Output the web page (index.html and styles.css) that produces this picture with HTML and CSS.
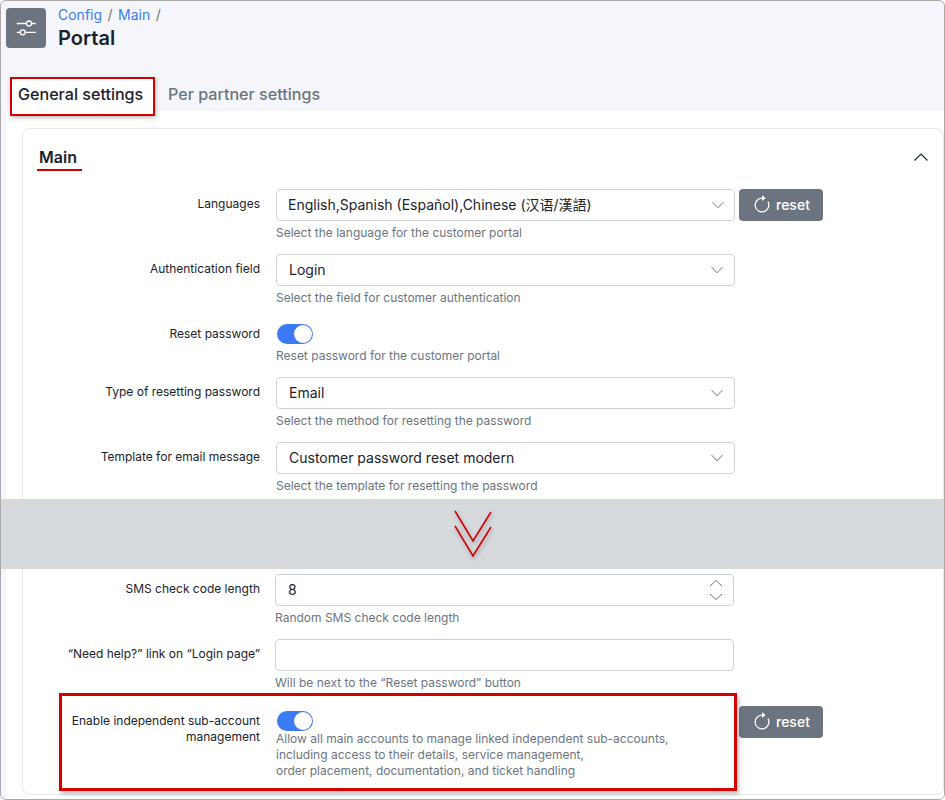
FILE: index.html
```html
<!DOCTYPE html>
<html lang="en">
<head>
    <meta charset="UTF-8">
    <meta name="viewport" content="width=device-width, initial-scale=1.0">
    <title>Portal</title>
    <link rel="stylesheet" href="styles.css">
</head>
<body>
    <div class="page">
        <header class="page-header">
            <div class="page-icon">
                <svg width="28" height="28" viewBox="0 0 28 28" fill="none" stroke="#fff" stroke-width="1.3">
                    <path d="M4.700 9.500H23.700M4.700 18.300H23.700"/>
                    <circle cx="17" cy="9.500" r="2.500" fill="#6c757f"/>
                    <circle cx="10.700" cy="18.300" r="2.500" fill="#6c757f"/>
                </svg>
            </div>
            <div>
                <div class="breadcrumb">
                    <a href="#">Config</a><span>/</span><a href="#">Main</a><span>/</span>
                </div>
                <h1>Portal</h1>
            </div>
        </header>

        <div class="tabs">
            <div class="tab active">General settings</div>
            <div class="tab">Per partner settings</div>
        </div>

        <div class="tab-content">
            <div class="card">
                <div class="card-head">
                    <h2>Main</h2>
                    <svg class="collapse" width="14" height="8" viewBox="0 0 14 8" fill="none" stroke="#1f2d3d" stroke-width="1.2">
                        <path d="M0.500 7.500L7 1L13.500 7.500"/>
                    </svg>
                </div>

                <div class="row">
                    <label>Languages</label>
                    <div class="control">
                        <div class="select">English,Spanish (Español),Chinese (汉语/漢語)
                            <svg class="arrow" width="12" height="8" viewBox="0 0 12 8" fill="none" stroke="#6b7786" stroke-width="1"><path d="M0.500 1L6 6.800L11.500 1"/></svg>
                        </div>
                        <div class="help">Select the language for the customer portal</div>
                    </div>
                    <button class="reset">
                        <svg width="20" height="20" viewBox="0 0 16 16" fill="#fff"><path d="M8 3a5 5 0 1 0 4.546 2.914.5.5 0 0 1 .908-.417A6 6 0 1 1 8 2z"/><path d="M8 4.466V.534a.25.25 0 0 1 .41-.192l2.36 1.966c.12.1.12.284 0 .384L8.410 4.658A.25.25 0 0 1 8 4.466"/></svg>
                        reset
                    </button>
                </div>

                <div class="row">
                    <label>Authentication field</label>
                    <div class="control">
                        <div class="select pad">Login
                            <svg class="arrow" width="12" height="8" viewBox="0 0 12 8" fill="none" stroke="#6b7786" stroke-width="1"><path d="M0.500 1L6 6.800L11.500 1"/></svg>
                        </div>
                        <div class="help">Select the field for customer authentication</div>
                    </div>
                </div>

                <div class="row">
                    <label>Reset password</label>
                    <div class="control">
                        <div class="toggle"></div>
                        <div class="help tight">Reset password for the customer portal</div>
                    </div>
                </div>

                <div class="row">
                    <label>Type of resetting password</label>
                    <div class="control">
                        <div class="select pad">Email
                            <svg class="arrow" width="12" height="8" viewBox="0 0 12 8" fill="none" stroke="#6b7786" stroke-width="1"><path d="M0.500 1L6 6.800L11.500 1"/></svg>
                        </div>
                        <div class="help">Select the method for resetting the password</div>
                    </div>
                </div>

                <div class="row before-cut">
                    <label>Template for email message</label>
                    <div class="control">
                        <div class="select pad">Customer password reset modern
                            <svg class="arrow" width="12" height="8" viewBox="0 0 12 8" fill="none" stroke="#6b7786" stroke-width="1"><path d="M0.500 1L6 6.800L11.500 1"/></svg>
                        </div>
                        <div class="help">Select the template for resetting the password</div>
                    </div>
                </div>

                <div class="cut">
                    <svg width="38" height="50" viewBox="0 0 38 50" fill="none" stroke="#d40000" stroke-width="1.600">
                        <path d="M1 1L19 31L37 2"/>
                        <path d="M1 16L19 46L37 17"/>
                    </svg>
                </div>

                <div class="row shifted">
                    <label>SMS check code length</label>
                    <div class="control">
                        <div class="select pad">8
                            <svg class="spin" width="14" height="22" viewBox="0 0 14 22" fill="none" stroke="#6b7786" stroke-width="1"><path d="M1 7L7 1.500L13 7M1 15L7 20.500L13 15"/></svg>
                        </div>
                        <div class="help">Random SMS check code length</div>
                    </div>
                </div>

                <div class="row shifted">
                    <label>“Need help?” link on “Login page”</label>
                    <div class="control">
                        <div class="select"></div>
                        <div class="help">Will be next to the “Reset password” button</div>
                    </div>
                </div>

                <div class="row last">
                    <div class="mark-box"></div>
                    <label>Enable independent sub-account management</label>
                    <div class="control">
                        <div class="toggle"></div>
                        <div class="help close">Allow all main accounts to manage linked independent sub-accounts,<br>including access to their details, service management,<br>order placement, documentation, and ticket handling</div>
                    </div>
                    <button class="reset">
                        <svg width="20" height="20" viewBox="0 0 16 16" fill="#fff"><path d="M8 3a5 5 0 1 0 4.546 2.914.5.5 0 0 1 .908-.417A6 6 0 1 1 8 2z"/><path d="M8 4.466V.534a.25.25 0 0 1 .41-.192l2.36 1.966c.12.1.12.284 0 .384L8.410 4.658A.25.25 0 0 1 8 4.466"/></svg>
                        reset
                    </button>
                </div>
            </div>
        </div>
    </div>
</body>
</html>
```

FILE: styles.css
```css
* {
    box-sizing: border-box;
}
body {
    margin: 0;
    font-family: Inter, "Noto Sans CJK SC", sans-serif;
    color: #1b222c;
    background-color: #fff;
}
.page {
    height: 800px;
    overflow: hidden;
    border: 1px solid #a9a9a9;
    border-radius: 6px;
    background-color: #f4f6fb;
}
.page-header {
    display: flex;
    gap: 12px;
    padding: 7px 0 0 5px;
    height: 76px;
}
.page-icon {
    width: 40px;
    height: 40px;
    border-radius: 4px;
    background-color: #6c757f;
    display: flex;
    justify-content: center;
    align-items: center;
}
.breadcrumb {
    display: flex;
    gap: 5.5px;
    font-size: 14px;
    line-height: 14px;
    color: #6c757f;
}
.breadcrumb a {
    color: #3b7cf6;
    text-decoration: none;
}
h1 {
    margin: 4px 0 0;
    font-size: 20px;
    line-height: 24px;
    font-weight: 600;
}
.tabs {
    display: flex;
    height: 34px;
    padding-left: 9px;
}
.tab {
    position: relative;
    padding: 0 8px;
    height: 39px;
    line-height: 35px;
    font-size: 16.1px;
    font-weight: 500;
    color: #6c757f;
    margin-right: 5px;
}
.tab.active {
    color: #1b222c;
    background-color: #fff;
    border: 2px solid #d40000;
    line-height: 31px;
    padding: 0 9px 0 6px;
    box-shadow: 1px 2px 4px rgba(0, 0, 0, 0.25);
    z-index: 1;
    width: 145px;
}
.tab-content {
    background-color: #fff;
    margin-left: 5px;
    padding: 17px 0 0 16px;
    height: 690px;
}
.card {
    border: 1px solid #e6e8ed;
    border-radius: 8px;
    height: 667px;
}
.card-head {
    height: 60px;
    display: flex;
    justify-content: space-between;
    padding: 17px 15px 0 14px;
}
h2 {
    margin: 0;
    font-size: 16px;
    line-height: 23px;
    font-weight: 600;
    height: 25px;
    padding: 0 5px 0 2px;
    border-bottom: 2px solid #d40000;
}
.collapse {
    margin-top: 7px;
}
.row {
    position: relative;
    display: grid;
    grid-template-columns: 237px 459px auto;
    column-gap: 16px;
    padding-bottom: 13px;
    align-items: start;
}
.row .control {
    width: 459px;
}
.row .reset {
    margin-left: -12px;
}
.row.before-cut {
    padding-bottom: 5px;
}
.row.shifted .control {
    margin-left: -1px;
}
.row.last {
    margin-top: 2px;
}
label {
    display: block;
    text-align: right;
    font-size: 12px;
    line-height: 16px;
    padding-top: 7px;
}
.select {
    position: relative;
    height: 32px;
    border: 1px solid #ced2da;
    border-radius: 4px;
    background-color: #fff;
    padding-left: 11px;
    font-size: 14px;
    line-height: 30px;
}
.select.pad {
    padding-left: 12px;
}
.arrow {
    position: absolute;
    right: 10px;
    top: 11px;
}
.select.pad .arrow {
    right: 11px;
}
.spin {
    position: absolute;
    right: 10px;
    top: 4px;
}
.help {
    margin-top: 4px;
    font-size: 12px;
    line-height: 16px;
    color: #6c757f;
}
.help.tight {
    margin-top: 0;
}
.help.close {
    margin-top: -4px;
}
.toggle {
    position: relative;
    width: 36px;
    height: 20px;
    margin: 5px 0 4px 1px;
    border-radius: 10px;
    background-color: #3b7cf6;
}
.toggle::after {
    content: "";
    position: absolute;
    right: 1px;
    top: 1px;
    width: 18px;
    height: 18px;
    border-radius: 50%;
    background-color: #fff;
}
.reset {
    display: flex;
    align-items: center;
    gap: 4px;
    width: 84px;
    height: 32px;
    padding: 0 0 1px 13px;
    border: none;
    border-radius: 4px;
    background-color: #6c757f;
    color: #fff;
    font-family: inherit;
    font-size: 14px;
    font-weight: 500;
}
.cut {
    height: 70px;
    margin-left: -22px;
    margin-right: -2px;
    margin-bottom: 5px;
    padding-top: 11px;
    background-color: #d6d9de;
    display: flex;
    justify-content: center;
    align-items: flex-start;
}
.cut svg {
    filter: drop-shadow(1px 2px 2px rgba(0, 0, 0, 0.3));
}
.mark-box {
    position: absolute;
    left: 36px;
    top: -13px;
    width: 678px;
    height: 98px;
    border: 3px solid #d40000;
    box-shadow: 2px 3px 4px rgba(0, 0, 0, 0.25);
    pointer-events: none;
}
```
